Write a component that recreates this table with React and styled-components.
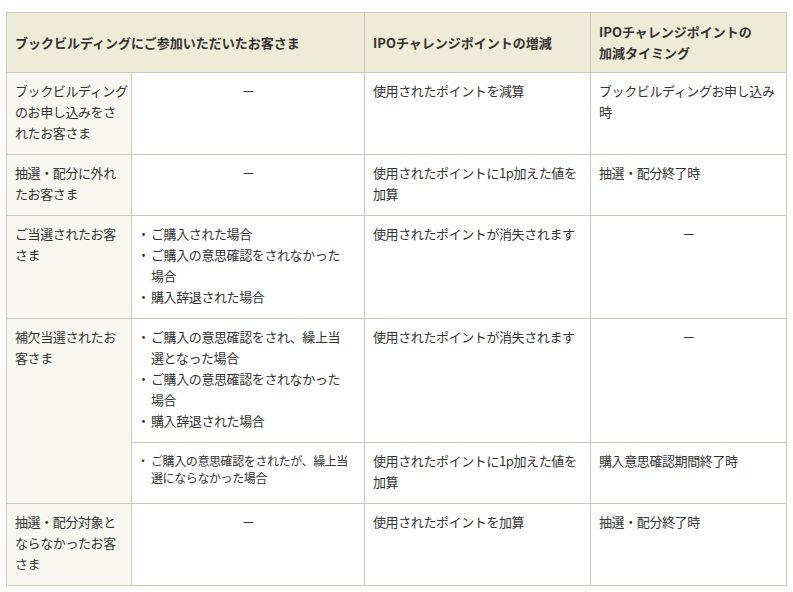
import React from "react";
import styled, { createGlobalStyle } from "styled-components";

const Global = createGlobalStyle`
  html, body { margin: 0; padding: 0; background: #fff; }
  body {
    font-family: "Noto Sans CJK JP", "Noto Sans", sans-serif;
    color: #333;
  }
`;

const Page = styled.div`
  padding: 12px 0 0 6px;
`;

const Table = styled.table`
  border-collapse: collapse;
  table-layout: fixed;
  width: 780px;
  font-size: 13px;
  line-height: 21px;
  letter-spacing: -0.4px;
`;

const Th = styled.th`
  background: #eeebd6;
  border: 1px solid #cbc9bb;
  padding: 8px 8px 9px;
  text-align: left;
  vertical-align: middle;
  font-weight: bold;
  letter-spacing: 0;
  white-space: nowrap;
`;

const Td = styled.td`
  border: 1px solid #cbc9bb;
  padding: 7px 8px 11px;
  vertical-align: top;
  text-align: ${(p) => (p.$center ? "center" : "left")};
  background: ${(p) => (p.$label ? "#f8f8f0" : "#fff")};
  white-space: nowrap;
`;

const Dash = styled.span`
  display: inline-block;
`;

const List = styled.ul`
  list-style: none;
  margin: 0;
  padding: 0;
  font-size: ${(p) => (p.$small ? "12px" : "13px")};
  line-height: ${(p) => (p.$small ? "17px" : "21px")};
  padding-top: ${(p) => (p.$small ? "2px" : "0")};
`;

const Item = styled.li`
  display: flex;
  align-items: flex-start;
`;

const Bullet = styled.span`
  flex: 0 0 11px;
  overflow: visible;
  &::before {
    content: "・";
    display: inline-block;
    margin-left: -3px;
  }
`;

const ItemText = styled.span`
  flex: 1;
`;

const Lines = ({ lines }) =>
  lines.map((l, i) => (
    <React.Fragment key={i}>
      {i > 0 && <br />}
      {l}
    </React.Fragment>
  ));

const Bullets = ({ items, small }) => (
  <List $small={small}>
    {items.map((it, i) => (
      <Item key={i}>
        <Bullet />
        <ItemText>
          <Lines lines={it} />
        </ItemText>
      </Item>
    ))}
  </List>
);

export default function App() {
  return (
    <Page>
      <Global />
      <Table>
        <colgroup>
          <col style={{ width: 125 }} />
          <col style={{ width: 233 }} />
          <col style={{ width: 226 }} />
          <col style={{ width: 196 }} />
        </colgroup>
        <thead>
          <tr>
            <Th colSpan={2}>ブックビルディングにご参加いただいたお客さま</Th>
            <Th>IPOチャレンジポイントの増減</Th>
            <Th>
              IPOチャレンジポイントの
              <br />
              加減タイミング
            </Th>
          </tr>
        </thead>
        <tbody>
          <tr>
            <Td $label>
              <Lines lines={["ブックビルディング", "のお申し込みをさ", "れたお客さま"]} />
            </Td>
            <Td $center>
              <Dash>－</Dash>
            </Td>
            <Td>使用されたポイントを減算</Td>
            <Td>
              <Lines lines={["ブックビルディングお申し込み", "時"]} />
            </Td>
          </tr>
          <tr>
            <Td $label>
              <Lines lines={["抽選・配分に外れ", "たお客さま"]} />
            </Td>
            <Td $center>
              <Dash>－</Dash>
            </Td>
            <Td>
              <Lines lines={["使用されたポイントに1p加えた値を", "加算"]} />
            </Td>
            <Td>抽選・配分終了時</Td>
          </tr>
          <tr>
            <Td $label>
              <Lines lines={["ご当選されたお客", "さま"]} />
            </Td>
            <Td>
              <Bullets
                items={[
                  ["ご購入された場合"],
                  ["ご購入の意思確認をされなかった", "場合"],
                  ["購入辞退された場合"],
                ]}
              />
            </Td>
            <Td>使用されたポイントが消失されます</Td>
            <Td $center>
              <Dash>－</Dash>
            </Td>
          </tr>
          <tr>
            <Td $label rowSpan={2}>
              <Lines lines={["補欠当選されたお", "客さま"]} />
            </Td>
            <Td>
              <Bullets
                items={[
                  ["ご購入の意思確認をされ、繰上当", "選となった場合"],
                  ["ご購入の意思確認をされなかった", "場合"],
                  ["購入辞退された場合"],
                ]}
              />
            </Td>
            <Td>使用されたポイントが消失されます</Td>
            <Td $center>
              <Dash>－</Dash>
            </Td>
          </tr>
          <tr>
            <Td>
              <Bullets
                small
                items={[["ご購入の意思確認をされたが、繰上当", "選にならなかった場合"]]}
              />
            </Td>
            <Td>
              <Lines lines={["使用されたポイントに1p加えた値を", "加算"]} />
            </Td>
            <Td>購入意思確認期間終了時</Td>
          </tr>
          <tr>
            <Td $label>
              <Lines lines={["抽選・配分対象と", "ならなかったお客", "さま"]} />
            </Td>
            <Td $center>
              <Dash>－</Dash>
            </Td>
            <Td>使用されたポイントを加算</Td>
            <Td>抽選・配分終了時</Td>
          </tr>
        </tbody>
      </Table>
    </Page>
  );
}
